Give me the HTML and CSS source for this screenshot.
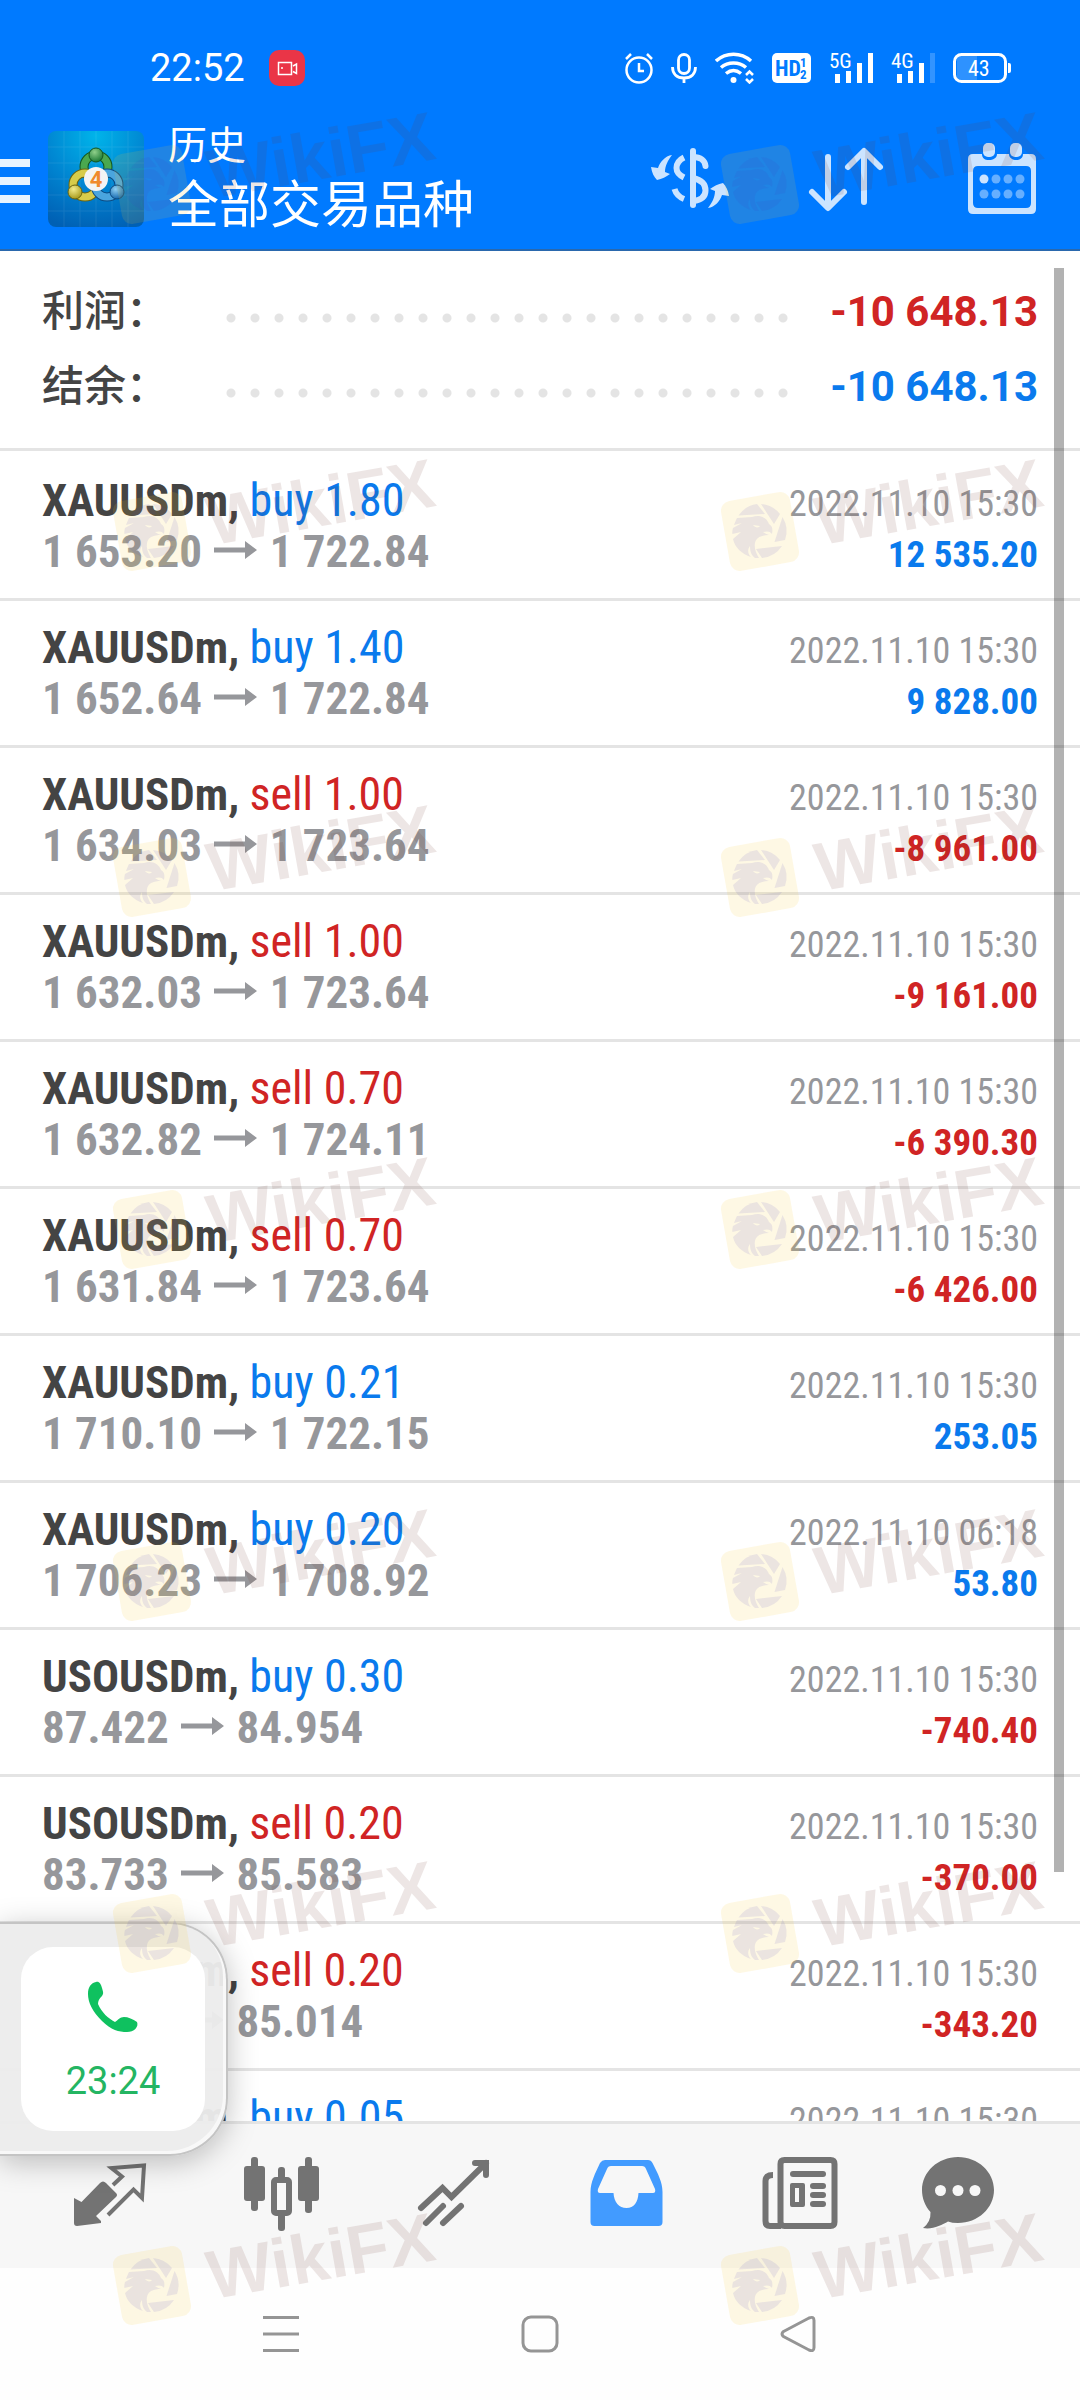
FILE: index.html
```html
<!DOCTYPE html>
<html lang="zh-CN">
<head>
  <meta charset="UTF-8" />
  <meta name="viewport" content="width=device-width, initial-scale=1.0" />
  <title>历史</title>
  <link rel="stylesheet" href="styles.css">
</head>
<body>
  <!-- Shared shapes -->
  <svg class="shapes" width="0" height="0" aria-hidden="true">
    <symbol id="arrow" viewBox="0 0 43 18">
      <path d="M0 6.500H31V0L43 9L31 18V11.500H0Z" fill="#96979b" />
    </symbol>
    <symbol id="eagle" viewBox="0 0 92 92">
      <rect x="11" y="11" width="70" height="71" rx="10" transform="rotate(-10 46 46.500)" fill="rgba(247,203,50,.13)" />
      <g fill="rgba(64,60,200,.1)">
        <path d="M24.500 30.500A27 27 0 0 1 43 19L51 29Z" />
        <path d="M47 19A27 27 0 0 1 66 29L60 39Z" />
        <path d="M68.500 32A27 27 0 0 1 71 55L60.500 57Z" />
        <path d="M68 61A27 27 0 0 1 48 73L42 64Z" />
        <path fill-rule="evenodd" d="M23 33L38 32C46 29 53 33 55 39C58 41 59 43 58 49C56 46 53 46 49 47C52 49 53 49 55 50C48 50 42 52 41 58C40 63 42 68 45 73L41 73C37 70 36 66 36 61C33 65 34 69 37 72C28 69 21 63 19 54L27 47L18.500 49C18 47 18.500 45 19 43L28 38L20 40C21 37 22 35 23 33ZM39 40C41 43 45 43 46 41Z" />
      </g>
    </symbol>
  </svg>

  <div class="phone">
    <div class="status-bar">
      <span class="clock">22:52</span>
      <svg class="record" width="36" height="36" viewBox="0 0 36 36">
        <rect width="36" height="36" rx="10" fill="#ea3547" />
        <g fill="none" stroke="#fff" stroke-width="1.500">
          <rect x="9.500" y="12.500" width="13" height="12" />
          <path d="M24 16L27.500 14V23.500L24 21.500" />
        </g>
        <circle cx="13" cy="18" r="1" fill="#fff" />
      </svg>
      <div class="status-icons">
        <svg width="28" height="32" viewBox="0 0 28 32" fill="none" stroke="#fff" stroke-width="2.500">
          <circle cx="14" cy="18" r="12.500" />
          <path d="M14 11V19H19M1 7L6 2M22 2L27 7" />
        </svg>
        <svg width="26" height="32" viewBox="0 0 26 32" fill="none" stroke="#fff" stroke-width="2.800">
          <rect x="7.500" y="2.500" width="11" height="19" rx="5.500" />
          <path d="M1.500 15C1.500 22 6 26 13 26S24.500 22 24.500 15M13 26V31" />
        </svg>
        <svg width="39" height="32" viewBox="0 0 39 32" fill="none" stroke="#fff" stroke-width="3.500">
          <path d="M1 9C11 0 26 0 36 9M6 15.500C13 9.500 24 9.500 31 15.500M11 21.500C16 17.500 21 17.500 26 21.500" />
          <circle cx="18.500" cy="28" r="3" fill="#fff" stroke="none" />
          <path d="M31 23L34.500 19.500L38 23M31 27L34.500 30.500L38 27" stroke-width="2.500" />
        </svg>
        <svg width="39" height="32" viewBox="0 0 39 32">
          <rect y="1" width="39" height="30" rx="5" fill="#fff" />
          <text class="badge-text" x="3" y="24" font-size="22">HD</text>
          <text class="badge-text" x="28" y="15" font-size="13">1</text>
          <text class="badge-text" x="28" y="27" font-size="13">2</text>
        </svg>
        <svg width="44" height="40" viewBox="0 -4 44 40" fill="#fff">
          <text class="net-text" x="0" y="16" font-size="21">5G</text>
          <path d="M6 22h5v9h-5zM17 19h5v12h-5zM28 11h5v20h-5zM39 1h5v30h-5z" />
        </svg>
        <svg width="44" height="40" viewBox="0 -4 44 40" fill="#fff">
          <text class="net-text" x="0" y="16" font-size="21">4G</text>
          <path d="M6 22h5v9h-5zM17 19h5v12h-5zM28 11h5v20h-5z" />
          <path d="M39 1h5v30h-5z" opacity=".2" />
        </svg>
        <svg width="58" height="32" viewBox="0 0 58 32">
          <path d="M4 4H24V28H4Z" fill="#fff" opacity=".18" />
          <rect x="1.500" y="2.500" width="51" height="27" rx="7" fill="none" stroke="#fff" stroke-width="3" />
          <path d="M55 11h1q2 0 2 2v6q0 2-2 2h-1z" fill="#fff" />
          <text class="net-text" x="15" y="24" font-size="22" fill="#fff">43</text>
        </svg>
      </div>
    </div>

    <header class="app-bar">
      <button class="menu-button" aria-label="菜单"><span></span><span></span><span></span></button>
      <svg class="logo" width="96" height="96" viewBox="0 0 96 96">
        <defs>
          <radialGradient id="sky" cx=".5" cy=".05" r="1">
            <stop offset="0" stop-color="#00b4ea" />
            <stop offset=".55" stop-color="#0083d0" />
            <stop offset="1" stop-color="#0060b4" />
          </radialGradient>
          <radialGradient id="green" cx=".4" cy=".3" r=".7"><stop offset="0" stop-color="#8fd08a" /><stop offset="1" stop-color="#1d7a35" /></radialGradient>
          <radialGradient id="yellow" cx=".4" cy=".3" r=".7"><stop offset="0" stop-color="#f4ec8c" /><stop offset="1" stop-color="#a89a1c" /></radialGradient>
          <radialGradient id="blue" cx=".4" cy=".3" r=".7"><stop offset="0" stop-color="#8fd0f4" /><stop offset="1" stop-color="#1568ae" /></radialGradient>
        </defs>
        <rect width="96" height="96" rx="8" fill="url(#sky)" />
        <path d="M16 0V96M32 0V96M48 0V96M64 0V96M80 0V96M0 16H96M0 32H96M0 48H96M0 64H96M0 80H96" stroke="#fff" opacity=".08" />
        <g fill="none">
          <circle cx="48" cy="36" r="12" stroke="#14551f" stroke-width="9" />
          <circle cx="48" cy="36" r="12" stroke="#4aa84f" stroke-width="7" />
          <circle cx="37" cy="54" r="12" stroke="#6b6410" stroke-width="9" />
          <circle cx="37" cy="54" r="12" stroke="#d8cc4a" stroke-width="7" />
          <circle cx="59" cy="54" r="12" stroke="#0d4a80" stroke-width="9" />
          <circle cx="59" cy="54" r="12" stroke="#4aa5de" stroke-width="7" />
        </g>
        <circle cx="48" cy="24" r="7" fill="url(#green)" stroke="#14551f" />
        <circle cx="27" cy="61" r="7" fill="url(#yellow)" stroke="#6b6410" />
        <circle cx="69" cy="61" r="7" fill="url(#blue)" stroke="#0d4a80" />
        <circle cx="48" cy="48" r="12" fill="#f4f4f4" />
        <text class="logo-text" x="48" y="56" font-size="22" text-anchor="middle">4</text>
      </svg>
      <div class="titles">
        <h1 class="title">历史</h1>
        <p class="subtitle">全部交易品种</p>
      </div>
      <div class="actions">
        <button class="action" aria-label="货币">
          <svg width="96" height="96" viewBox="0 0 96 96" fill="none" stroke="#cce4ff" stroke-width="6">
            <path d="M51 20V74" stroke-linecap="round" />
            <path d="M51 26C59 26 63 30 63.500 35" stroke-linecap="round" />
            <path d="M51 47C60 49 63.500 54 63.500 59.500C63.500 65 60 69 51 70" />
            <path d="M42 26.500C37 29 34.500 33 34.500 37C34.500 41 37 44 42 46.500M32.500 58C34 63 37 66 42 68" />
            <path d="M30 24C23 25 18 31 16 37L9 36C10 42 12 46 15 49C20 48 24 46 28 43L23 41C23 35 26 29 30 24ZM66 77C73 76 78 70 80 64L87 65C86 59 84 55 81 52C76 53 72 55 68 58L73 60C73 66 70 72 66 77Z" fill="#cce4ff" stroke="none" />
          </svg>
        </button>
        <button class="action" aria-label="排序">
          <svg width="96" height="96" viewBox="0 0 96 96" fill="none" stroke="#cce4ff" stroke-width="6" stroke-linecap="round" stroke-linejoin="round">
            <path d="M30 26V76M14 61L30 77L46 61M66 71V21M50 36L66 20L82 36" />
          </svg>
        </button>
        <button class="action" aria-label="日期">
          <svg width="96" height="96" viewBox="0 0 96 96">
            <path fill="#cce4ff" fill-rule="evenodd" d="M19 23H28V24C29 29 33 29 35 29C39 29 43 27 43 23H55C55 27 59 29 62 29C66 29 69 27 69 23H77Q82 23 82 28V78Q82 83 77 83H19Q14 83 14 78V28Q14 23 19 23ZM24 35Q19 35 19 40V72Q19 77 24 77H72Q77 77 77 72V40Q77 35 72 35Z" />
            <rect x="29" y="12" width="12" height="14" rx="5" fill="#cce4ff" />
            <rect x="56" y="12" width="12" height="14" rx="5" fill="#cce4ff" />
            <circle cx="30" cy="48" r="4.500" fill="#cce4ff" />
            <g fill="#66afff">
              <circle cx="42" cy="48" r="4.500" /><circle cx="54" cy="48" r="4.500" /><circle cx="66" cy="48" r="4.500" />
              <circle cx="30" cy="63" r="4.500" /><circle cx="42" cy="63" r="4.500" /><circle cx="54" cy="63" r="4.500" /><circle cx="66" cy="63" r="4.500" />
            </g>
          </svg>
        </button>
      </div>
    </header>

    <main class="history">
      <dl class="summary">
        <div class="summary-row"><dt>利润：</dt><dd class="sell">-10 648.13</dd></div>
        <div class="summary-row"><dt>结余：</dt><dd class="buy">-10 648.13</dd></div>
      </dl>
      <ul class="deals">
        <li class="deal">
          <div class="line"><span class="symbol">XAUUSDm, <span class="buy">buy 1.80</span></span><time>2022.11.10 15:30</time></div>
          <div class="line"><span class="prices">1 653.20 <svg><use href="#arrow" /></svg> 1 722.84</span><b class="buy">12 535.20</b></div>
        </li>
        <li class="deal">
          <div class="line"><span class="symbol">XAUUSDm, <span class="buy">buy 1.40</span></span><time>2022.11.10 15:30</time></div>
          <div class="line"><span class="prices">1 652.64 <svg><use href="#arrow" /></svg> 1 722.84</span><b class="buy">9 828.00</b></div>
        </li>
        <li class="deal">
          <div class="line"><span class="symbol">XAUUSDm, <span class="sell">sell 1.00</span></span><time>2022.11.10 15:30</time></div>
          <div class="line"><span class="prices">1 634.03 <svg><use href="#arrow" /></svg> 1 723.64</span><b class="sell">-8 961.00</b></div>
        </li>
        <li class="deal">
          <div class="line"><span class="symbol">XAUUSDm, <span class="sell">sell 1.00</span></span><time>2022.11.10 15:30</time></div>
          <div class="line"><span class="prices">1 632.03 <svg><use href="#arrow" /></svg> 1 723.64</span><b class="sell">-9 161.00</b></div>
        </li>
        <li class="deal">
          <div class="line"><span class="symbol">XAUUSDm, <span class="sell">sell 0.70</span></span><time>2022.11.10 15:30</time></div>
          <div class="line"><span class="prices">1 632.82 <svg><use href="#arrow" /></svg> 1 724.11</span><b class="sell">-6 390.30</b></div>
        </li>
        <li class="deal">
          <div class="line"><span class="symbol">XAUUSDm, <span class="sell">sell 0.70</span></span><time>2022.11.10 15:30</time></div>
          <div class="line"><span class="prices">1 631.84 <svg><use href="#arrow" /></svg> 1 723.64</span><b class="sell">-6 426.00</b></div>
        </li>
        <li class="deal">
          <div class="line"><span class="symbol">XAUUSDm, <span class="buy">buy 0.21</span></span><time>2022.11.10 15:30</time></div>
          <div class="line"><span class="prices">1 710.10 <svg><use href="#arrow" /></svg> 1 722.15</span><b class="buy">253.05</b></div>
        </li>
        <li class="deal">
          <div class="line"><span class="symbol">XAUUSDm, <span class="buy">buy 0.20</span></span><time>2022.11.10 06:18</time></div>
          <div class="line"><span class="prices">1 706.23 <svg><use href="#arrow" /></svg> 1 708.92</span><b class="buy">53.80</b></div>
        </li>
        <li class="deal">
          <div class="line"><span class="symbol">USOUSDm, <span class="buy">buy 0.30</span></span><time>2022.11.10 15:30</time></div>
          <div class="line"><span class="prices">87.422 <svg><use href="#arrow" /></svg> 84.954</span><b class="sell">-740.40</b></div>
        </li>
        <li class="deal">
          <div class="line"><span class="symbol">USOUSDm, <span class="sell">sell 0.20</span></span><time>2022.11.10 15:30</time></div>
          <div class="line"><span class="prices">83.733 <svg><use href="#arrow" /></svg> 85.583</span><b class="sell">-370.00</b></div>
        </li>
        <li class="deal">
          <div class="line"><span class="symbol">USOUSDm, <span class="sell">sell 0.20</span></span><time>2022.11.10 15:30</time></div>
          <div class="line"><span class="prices">83.298 <svg><use href="#arrow" /></svg> 85.014</span><b class="sell">-343.20</b></div>
        </li>
        <li class="deal">
          <div class="line"><span class="symbol">USOUSDm, <span class="buy">buy 0.05</span></span><time>2022.11.10 15:30</time></div>
        </li>
      </ul>
      <div class="scrollbar"></div>
    </main>

    <nav class="tab-bar">
      <button aria-label="行情">
        <svg width="96" height="96" viewBox="0 0 96 96">
          <path d="M12 50L19.500 54L38 35Q41 32 44 35L54 45Q56 47 54 49L34 68L39 73V75L15 78Q12 78 12 75Z" />
          <path d="M46 67L71.500 41.500L80 50L82 17.500L49.500 20L60 28.500L51 37" fill="none" stroke="#737373" stroke-width="4" />
        </svg>
      </button>
      <button aria-label="图表">
        <svg width="96" height="96" viewBox="0 0 96 96">
          <rect x="17" y="9" width="7" height="54" rx="3" /><rect x="10" y="18" width="21" height="35" rx="3" />
          <rect x="71" y="9" width="7" height="56" rx="3" /><rect x="64" y="18" width="21" height="35" rx="3" />
          <rect x="44" y="19" width="7" height="20" rx="3" /><rect x="44" y="62" width="7" height="21" rx="3" />
          <rect x="40" y="32" width="15" height="33" rx="2" fill="#f7f7f7" stroke="#737373" stroke-width="6" />
        </svg>
      </button>
      <button aria-label="交易">
        <svg width="96" height="96" viewBox="0 0 96 96" fill="none" stroke="#737373" stroke-width="6" stroke-linecap="round">
          <path d="M15 60L36.500 40L45.500 49L80 15M69 15H80V27" />
          <path d="M20 75L37 58M37 75L55 58" />
        </svg>
      </button>
      <button class="active" aria-label="历史">
        <svg width="96" height="96" viewBox="0 0 96 96">
          <path fill-rule="evenodd" d="M27 12H70Q73 12 74.500 15C80 26 84.500 34 84.500 44V74Q84.500 78 80.500 78H16.500Q12.500 78 12.500 74V44C12.500 34 17 26 22 15Q24 12 27 12ZM33 18Q30 18 29 21L20 41Q19 45 22 45H35.500C36 54 41 60 48.500 60S60 54 60.500 45H75Q78 45 77 41L68 21Q67 18 64 18Z" />
        </svg>
      </button>
      <button aria-label="新闻">
        <svg width="96" height="96" viewBox="0 0 96 96">
          <path d="M23 27Q15.500 27 15.500 33V73Q15.500 78 20 78H31M34.500 12H80.500Q84.500 12 84.500 16V74Q84.500 78 80.500 78H34.500Q30.500 78 30.500 74V16Q30.500 12 34.500 12Z" fill="none" stroke="#737373" stroke-width="6" />
          <rect x="40" y="23" width="36" height="6" rx="3" />
          <path fill-rule="evenodd" d="M42 35H53Q55 35 55 37V57Q55 59 53 59H42Q40 59 40 57V37Q40 35 42 35ZM45 40V54H49V40Z" />
          <rect x="60" y="35" width="16" height="6" rx="3" /><rect x="60" y="44" width="16" height="6" rx="3" /><rect x="60" y="53" width="16" height="6" rx="3" />
        </svg>
      </button>
      <button aria-label="消息">
        <svg width="96" height="96" viewBox="0 0 96 96">
          <path d="M36 9C56 9 72 24 72 42S56 75 36 75Q30 75 26 73.500C20 77 10 82 1 80Q9 74 8.500 64C3 58 0 50 0 42C0 24 16 9 36 9Z" />
          <g fill="#f7f7f7"><circle cx="18.500" cy="42.500" r="5.500" /><circle cx="36" cy="42.500" r="5.500" /><circle cx="53" cy="42.500" r="5.500" /></g>
        </svg>
      </button>
    </nav>

    <nav class="system-bar">
      <button aria-label="最近任务"><svg width="40" height="40" viewBox="0 0 40 40"><path d="M2 3.500H38M2 20H38M2 36.500H38" /></svg></button>
      <button aria-label="主屏幕"><svg width="40" height="40" viewBox="0 0 40 40"><rect x="3" y="3" width="34" height="34" rx="8" /></svg></button>
      <button aria-label="返回"><svg width="40" height="40" viewBox="0 0 40 40"><path d="M4.500 17.500L30 4Q35 2 35 6.500V33.500Q35 38 30 36L4.500 22.500Q1.500 20 4.500 17.500Z" /></svg></button>
    </nav>

    <!-- Floating call window -->
    <div class="call-window">
      <button class="call-card">
        <svg width="52" height="52" viewBox="0 0 52 52"><path fill="#0fc15f" d="M9 1C12 0 14 3 15 7C16 11 17 12 15 15C12 18 11 20 11 23C15 32 21 37 28 41C31 39 33 36 37 36C41 36 46 38 50 41C52 46 47 51 40 51C32 51 24 49 15 40C5 30 1 21 1 13C1 6 4 2 9 1Z" /></svg>
        <span>23:24</span>
      </button>
    </div>

    <div class="watermarks" aria-hidden="true">
      <div class="mark"><svg><use href="#eagle" /></svg><span>WikiFX</span></div>
      <div class="mark"><svg><use href="#eagle" /></svg><span>WikiFX</span></div>
      <div class="mark"><svg><use href="#eagle" /></svg><span>WikiFX</span></div>
      <div class="mark"><svg><use href="#eagle" /></svg><span>WikiFX</span></div>
      <div class="mark"><svg><use href="#eagle" /></svg><span>WikiFX</span></div>
      <div class="mark"><svg><use href="#eagle" /></svg><span>WikiFX</span></div>
      <div class="mark"><svg><use href="#eagle" /></svg><span>WikiFX</span></div>
      <div class="mark"><svg><use href="#eagle" /></svg><span>WikiFX</span></div>
      <div class="mark"><svg><use href="#eagle" /></svg><span>WikiFX</span></div>
      <div class="mark"><svg><use href="#eagle" /></svg><span>WikiFX</span></div>
      <div class="mark"><svg><use href="#eagle" /></svg><span>WikiFX</span></div>
      <div class="mark"><svg><use href="#eagle" /></svg><span>WikiFX</span></div>
      <div class="mark"><svg><use href="#eagle" /></svg><span>WikiFX</span></div>
      <div class="mark"><svg><use href="#eagle" /></svg><span>WikiFX</span></div>
    </div>
  </div>
</body>
</html>
```
FILE: styles.css
```css
* {
  box-sizing: border-box;
}
body {
  margin: 0;
  font-family: Roboto, 'Noto Sans CJK SC', sans-serif;
  color: #444;
  background-color: white;
}
button {
  margin: 0;
  padding: 0;
  border: none;
  background: none;
  font-family: inherit;
  cursor: pointer;
}
svg {
  display: block;
}
.shapes {
  position: absolute;
}
.phone {
  position: relative;
  display: flex;
  flex-direction: column;
  height: 100vh;
  overflow: hidden;
}
.buy {
  color: #0a7aed;
}
.sell {
  color: #d02424;
}
/* Status bar */
.status-bar {
  display: flex;
  align-items: center;
  height: 106px;
  padding: 30px 69px 0 150px;
  background-color: #007aff;
  color: white;
}
.clock {
  font-size: 38px;
  line-height: 44px;
}
.record {
  margin-left: 24px;
}
.status-icons {
  display: flex;
  align-items: center;
  gap: 18px;
  margin-left: auto;
}
.badge-text {
  font-family: 'Roboto Condensed', Roboto, sans-serif;
  font-weight: 700;
  fill: #007aff;
}
.net-text {
  font-family: 'Roboto Condensed', Roboto, sans-serif;
}
/* App bar */
.app-bar {
  display: flex;
  align-items: center;
  height: 145px;
  padding-top: 3px;
  background-color: #007aff;
  border-bottom: 2px solid #2a68ad;
  color: white;
}
.menu-button {
  display: flex;
  flex-direction: column;
  gap: 10px;
  width: 30px;
  padding-top: 3px;
}
.menu-button span {
  height: 8px;
  background-color: #e8f4ff;
}
.logo {
  margin-left: 18px;
}
.logo-text {
  font-family: Roboto, sans-serif;
  font-weight: 700;
  fill: #f08a2c;
}
.titles {
  margin-left: 24px;
}
.title {
  margin: 0;
  font-size: 39px;
  line-height: 54px;
  font-weight: 400;
}
.subtitle {
  margin: 0;
  font-size: 51px;
  line-height: 66px;
}
.actions {
  display: flex;
  margin-left: auto;
}
.action {
  padding: 0 30px;
}
/* History */
.history {
  position: relative;
  flex: 1;
  min-height: 0;
  overflow: hidden;
}
.summary {
  margin: 0;
  padding: 23px 42px 24px;
  border-bottom: 3px solid #e4e4e4;
}
.summary-row {
  display: flex;
  align-items: center;
  height: 75px;
  font-size: 42px;
  line-height: 50px;
}
.summary-row dt {
  width: 177px;
  font-weight: 500;
}
.summary-row dd {
  display: flex;
  flex: 1;
  align-items: center;
  margin: 0;
  font-weight: 700;
}
/* Dotted leader */
.summary-row dd::before {
  content: "";
  flex: 1;
  height: 24px;
  margin: 12px 35px 0 0;
  background: radial-gradient(circle, #e4e4e4 4px, transparent 5px) 0 0 / 24px 24px repeat-x;
}
.deals {
  margin: 0;
  padding: 3px 0 0;
  list-style: none;
}
.deal {
  padding: 21px 42px;
  border-bottom: 3px solid #e4e4e4;
  font-family: 'Roboto Condensed', Roboto, sans-serif;
}
.line {
  display: flex;
  justify-content: space-between;
  align-items: baseline;
  height: 51px;
  font-size: 45px;
  line-height: 51px;
}
.line time {
  font-size: 36px;
  color: #96979b;
}
.line b {
  font-size: 37px;
}
.symbol {
  font-weight: 700;
}
.symbol span {
  font-size: 46px;
  font-weight: 400;
}
.prices {
  font-weight: 700;
  color: #96979b;
}
.prices svg {
  display: inline-block;
  width: 43px;
  height: 18px;
  margin: 0 2px;
  vertical-align: 8px;
}
.scrollbar {
  position: absolute;
  top: 17px;
  right: 16px;
  width: 10px;
  height: 1604px;
  background-color: rgba(0, 0, 0, 0.3);
}
/* Tabs */
.tab-bar {
  display: flex;
  align-items: center;
  height: 147px;
  padding: 0 24px;
  background-color: #f7f7f7;
  border-top: 3px solid #e4e4e4;
}
.tab-bar button {
  display: flex;
  flex: 1;
  justify-content: center;
}
.tab-bar svg {
  fill: #737373;
}
.tab-bar svg[fill="none"] {
  fill: none;
}
.tab-bar .active svg {
  fill: #429bff;
}
.system-bar {
  display: flex;
  align-items: center;
  height: 132px;
  padding: 0 14%;
  background-color: #fefefe;
}
.system-bar button {
  display: flex;
  flex: 1;
  justify-content: center;
}
.system-bar svg {
  fill: none;
  stroke: #959595;
  stroke-width: 3px;
}
/* Call window over the list and the tabs */
.call-window {
  position: absolute;
  left: 0;
  bottom: 244px;
  padding: 23px 21px;
  background-color: rgba(236, 236, 236, 0.96);
  border: 2px solid #c4c4c4;
  border-left: none;
  border-radius: 0 58px 58px 0;
  box-shadow: 0 6px 30px rgba(0, 0, 0, 0.25), inset -3px -3px 0 #f8f8f8;
}
.call-card {
  display: flex;
  flex-direction: column;
  align-items: center;
  gap: 26px;
  width: 184px;
  height: 184px;
  padding-top: 34px;
  background-color: white;
  border-radius: 32px;
  color: #24b562;
  font-size: 38px;
  line-height: 44px;
}
/* Watermarks over everything */
.watermarks {
  position: absolute;
  top: 8px;
  left: 106px;
  display: grid;
  grid-template-columns: 608px 350px;
  grid-template-rows: 352px 341px repeat(5, 352px);
  pointer-events: none;
}
.mark {
  display: flex;
  align-items: center;
}
.mark svg {
  flex-shrink: 0;
  width: 92px;
  height: 92px;
}
.mark span {
  margin: -56px 0 0 8px;
  font-family: 'Liberation Sans', sans-serif;
  font-size: 69px;
  font-weight: 700;
  line-height: 70px;
  color: #71372f;
  opacity: 0.12;
  transform: rotate(-10deg);
}
```
